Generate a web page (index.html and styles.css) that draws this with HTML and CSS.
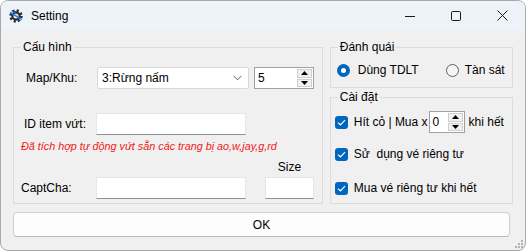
FILE: index.html
```html
<!DOCTYPE html>
<html>

<head>
  <link rel="stylesheet" href="styles.css">
</head>

<body>
  <div class="window">
    <div class="titlebar">
      <!-- app gear icon -->
      <svg class="app-icon" viewBox="0 0 14 14" width="14" height="14">
        <circle cx="7" cy="7" r="5.4" fill="none" stroke="#2b2b2b" stroke-width="2.6" stroke-dasharray="2.1 2.14" />
        <circle cx="7" cy="7" r="3.6" fill="none" stroke="#2b2b2b" stroke-width="2.2" />
        <path d="M1.2 3.4 L12.8 10.6" stroke="#1f7ae0" stroke-width="1.5" />
        <path d="M2.4 1.8 L7.6 5" stroke="#1f7ae0" stroke-width="1" />
      </svg>
      <span class="title">Setting</span>
      <div class="caption-buttons">
        <div class="cap-btn">
          <svg width="10" height="10" viewBox="0 0 10 10"><path d="M0 5.5 H10" stroke="#1a1a1a" stroke-width="1" /></svg>
        </div>
        <div class="cap-btn">
          <svg width="10" height="10" viewBox="0 0 10 10"><rect x="0.5" y="0.5" width="9" height="9" rx="1.2" fill="none" stroke="#1a1a1a" stroke-width="1" /></svg>
        </div>
        <div class="cap-btn">
          <svg width="11" height="11" viewBox="0 0 11 11"><path d="M0.5 0.5 L10.5 10.5 M10.5 0.5 L0.5 10.5" stroke="#1a1a1a" stroke-width="1" /></svg>
        </div>
      </div>
    </div>

    <div class="client">
      <div class="panels">
        <fieldset class="group group-config">
          <legend>Cấu hình</legend>

          <div class="map-row">
            <span class="map-label">Map/Khu:</span>
            <div class="combo">
              <span>3:Rừng nấm</span>
              <svg width="9" height="6" viewBox="0 0 9 6"><path d="M0.5 0.8 L4.5 4.8 L8.5 0.8" fill="none" stroke="#606060" stroke-width="1" /></svg>
            </div>
            <div class="spin spin-map">
              <span>5</span>
              <div class="spin-arrows">
                <div class="arrow"><svg width="7" height="4" viewBox="0 0 7 4"><path d="M0 4 L3.5 0 L7 4 Z" fill="#000" /></svg></div>
                <div class="arrow"><svg width="7" height="4" viewBox="0 0 7 4"><path d="M0 0 L3.5 4 L7 0 Z" fill="#000" /></svg></div>
              </div>
            </div>
          </div>

          <div class="id-row">
            <span class="id-label">ID item vứt:</span>
            <div class="textbox id-input"></div>
          </div>

          <div class="note">Đã tích hợp tự động vứt sẵn các trang bị ao,w,jay,g,rd</div>

          <div class="captcha-grid">
            <span class="size-label">Size</span>
            <span class="captcha-label">CaptCha:</span>
            <div class="textbox captcha-input"></div>
            <div class="textbox size-input"></div>
          </div>
        </fieldset>

        <div class="side">
          <fieldset class="group group-attack">
            <legend>Đánh quái</legend>
            <div class="radio-row">
              <label class="radio">
                <span class="radio-dot checked"></span>
                <span>Dùng TDLT</span>
              </label>
              <label class="radio">
                <span class="radio-dot"></span>
                <span>Tàn sát</span>
              </label>
            </div>
          </fieldset>

          <fieldset class="group group-settings">
            <legend>Cài đặt</legend>
            <div class="check-row first">
              <span class="check"><svg width="9" height="7" viewBox="0 0 9 7"><path d="M1 3.6 L3.4 5.8 L8 1.2" fill="none" stroke="#fff" stroke-width="1.2" /></svg></span>
              <span>Hít cỏ | Mua x</span>
              <div class="spin spin-buy">
                <span>0</span>
                <div class="spin-arrows">
                  <div class="arrow"><svg width="7" height="4" viewBox="0 0 7 4"><path d="M0 4 L3.5 0 L7 4 Z" fill="#000" /></svg></div>
                  <div class="arrow"><svg width="7" height="4" viewBox="0 0 7 4"><path d="M0 0 L3.5 4 L7 0 Z" fill="#000" /></svg></div>
                </div>
              </div>
              <span>khi hết</span>
            </div>
            <div class="check-row second">
              <span class="check"><svg width="9" height="7" viewBox="0 0 9 7"><path d="M1 3.6 L3.4 5.8 L8 1.2" fill="none" stroke="#fff" stroke-width="1.2" /></svg></span>
              <span class="keep-space">Sử  dụng vé riêng tư</span>
            </div>
            <div class="check-row third">
              <span class="check"><svg width="9" height="7" viewBox="0 0 9 7"><path d="M1 3.6 L3.4 5.8 L8 1.2" fill="none" stroke="#fff" stroke-width="1.2" /></svg></span>
              <span>Mua vé riêng tư khi hết</span>
            </div>
          </fieldset>
        </div>
      </div>

      <button class="ok-btn">OK</button>
    </div>

    <!-- size grip -->
    <svg class="grip" width="10" height="10" viewBox="0 0 10 10">
      <rect x="7" y="1" width="2" height="2" fill="#b0b0b0" />
      <rect x="4" y="4" width="2" height="2" fill="#b0b0b0" />
      <rect x="7" y="4" width="2" height="2" fill="#b0b0b0" />
      <rect x="1" y="7" width="2" height="2" fill="#b0b0b0" />
      <rect x="4" y="7" width="2" height="2" fill="#b0b0b0" />
      <rect x="7" y="7" width="2" height="2" fill="#b0b0b0" />
    </svg>
  </div>
</body>

</html>
```

FILE: styles.css
```css
body {
  margin: 0;
  background-color: #ffffff;
  font-family: "Liberation Sans", Arial, sans-serif;
  font-size: 12px;
  color: #000;
}

.window {
  position: relative;
  width: 526px;
  height: 251px;
  box-sizing: border-box;
  border: 1px solid #a9a9a9;
  border-radius: 8px;
  overflow: hidden;
  background-color: #f0f0f0;
}

.titlebar {
  display: flex;
  align-items: center;
  height: 29px;
  background-color: #eef3fa;
}

.app-icon {
  margin-left: 8px;
  margin-top: 1px;
}

.title {
  margin-left: 8px;
  margin-top: 1px;
}

.caption-buttons {
  display: flex;
  margin-left: auto;
  height: 100%;
}

.cap-btn {
  display: flex;
  align-items: center;
  justify-content: center;
  width: 46px;
  height: 100%;
}

.client {
  padding: 9px 12px 0 12px;
}

.panels {
  display: flex;
  gap: 7px;
}

/* group boxes */
.group {
  margin: 0;
  padding: 0;
  min-width: 0;
  border: 1px solid #dcdcdc;
  box-sizing: border-box;
}

.group legend {
  margin-left: 7px;
  padding: 0 2px;
  line-height: 16px;
  height: 16px;
}

.group-config {
  width: 311px;
  height: 165px;
}

.side {
  display: flex;
  flex-direction: column;
  gap: 1px;
  width: 184px;
}

.group-attack {
  height: 49px;
}

.group-settings {
  height: 115px;
}

/* left group rows */
.map-row {
  display: flex;
  align-items: center;
  margin-top: 12px;
  padding-left: 12px;
}

.map-label {
  width: 71px;
}

.combo {
  display: flex;
  align-items: center;
  justify-content: space-between;
  width: 152px;
  height: 22px;
  box-sizing: border-box;
  padding: 0 6px 0 4px;
  background-color: #fff;
  border: 1px solid #d9d9d9;
  border-radius: 2px;
}

.spin {
  display: flex;
  align-items: center;
  justify-content: space-between;
  height: 22px;
  box-sizing: border-box;
  padding: 1px 1px 1px 3px;
  background-color: #fff;
  border: 1px solid #a0a0a0;
}

.spin-map {
  width: 60px;
  margin-left: 5px;
}

.spin-arrows {
  display: flex;
  flex-direction: column;
  gap: 1px;
  height: 100%;
}

.arrow {
  display: flex;
  align-items: center;
  justify-content: center;
  width: 15px;
  flex: 1;
  background-color: #f0f0f0;
  border: 1px solid #cfcfcf;
  box-sizing: border-box;
}

.id-row {
  display: flex;
  align-items: center;
  margin-top: 24px;
  padding-left: 10px;
}

.id-label {
  width: 72px;
}

.textbox {
  height: 22px;
  box-sizing: border-box;
  background-color: #fff;
  border: 1px solid #e6e6e6;
  border-bottom-color: #8f8f8f;
}

.id-input {
  width: 150px;
}

.note {
  margin-top: 4px;
  padding-left: 7px;
  line-height: 14px;
  font-size: 10.8px;
  font-style: italic;
  color: #f01a1a;
}

.captcha-grid {
  display: grid;
  grid-template-columns: 75px 150px 19px 49px;
  grid-template-rows: 14px 22px;
  row-gap: 3px;
  margin-top: 7px;
  padding-left: 7px;
  align-items: center;
}

.size-label {
  grid-column: 4;
  grid-row: 1;
  text-align: center;
}

.captcha-label {
  grid-column: 1;
  grid-row: 2;
}

.captcha-input {
  grid-column: 2;
  grid-row: 2;
}

.size-input {
  grid-column: 4;
  grid-row: 2;
}

/* right groups */
.radio-row {
  display: flex;
  align-items: center;
  margin-top: 7px;
  padding-left: 6px;
}

.radio {
  display: flex;
  align-items: center;
  gap: 8px;
  line-height: 16px;
}

.radio + .radio {
  margin-left: 27px;
  gap: 6px;
}

.radio-dot {
  width: 13px;
  height: 13px;
  box-sizing: border-box;
  border-radius: 50%;
  border: 1px solid #5f5f5f;
  background-color: #f6f6f6;
}

.radio-dot.checked {
  border: 4px solid #0067c0;
  background-color: #fff;
}

.check-row {
  display: flex;
  align-items: center;
  gap: 6px;
  padding-left: 4px;
  line-height: 16px;
}

.check-row.first {
  margin-top: 6px;
  gap: 0;
}

.check-row.first .check {
  margin-right: 6px;
}

.check-row.second {
  margin-top: 13px;
}

.check-row.third {
  margin-top: 18px;
}

.check {
  display: flex;
  align-items: center;
  justify-content: center;
  width: 13px;
  height: 13px;
  border-radius: 3px;
  background-color: #0067c0;
}

.spin-buy {
  width: 36px;
  margin-left: 1px;
  margin-right: 4px;
}

.keep-space {
  white-space: pre;
}

.ok-btn {
  display: block;
  width: 497px;
  height: 25px;
  margin-top: 8px;
  padding: 0;
  font-family: inherit;
  font-size: 12px;
  color: #000;
  background-color: #fdfdfd;
  border: 1px solid #d0d0d0;
  border-bottom-color: #b8b8b8;
  border-radius: 4px;
}

.grip {
  position: absolute;
  right: 1px;
  bottom: 1px;
}
```
